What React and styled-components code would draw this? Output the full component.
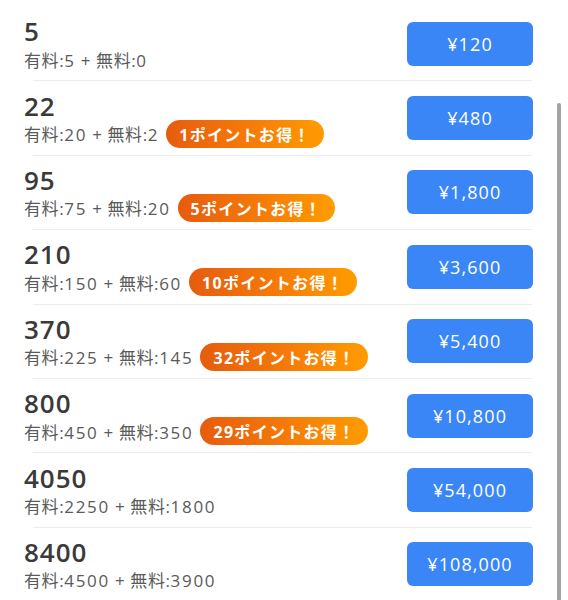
import styled, { createGlobalStyle } from "styled-components";

const GlobalStyle = createGlobalStyle`
    html, body {
        margin: 0;
        padding: 0;
        background: #ffffff;
    }
    body {
        font-family: "Open Sans", "Noto Sans CJK JP", sans-serif;
        overflow: hidden;
    }
`;

const Page = styled.div`
    position: relative;
    width: 568px;
    height: 600px;
    overflow: hidden;
    padding-top: 7px;
    box-sizing: border-box;
`;

const Row = styled.div`
    display: flex;
    align-items: center;
    justify-content: space-between;
    height: 73.4px;
    padding: 0 35px 0 24px;
    box-sizing: border-box;
`;

const Divider = styled.div`
    height: 1px;
    margin: 0 36px 0 33px;
    background: #ececec;
`;

const Info = styled.div`
    display: flex;
    flex-direction: column;
    padding-top: 3px;
`;

const Total = styled.div`
    font-size: 26px;
    font-weight: 600;
    line-height: 28px;
    letter-spacing: 1px;
    color: #3a3a3a;
`;

const Detail = styled.div`
    display: flex;
    align-items: center;
    gap: 7px;
    height: 28px;
    font-size: 17px;
    letter-spacing: 0.6px;
    color: #5a5a5a;
`;

const Num = styled.span`
    letter-spacing: 1.7px;
`;

const Badge = styled.span`
    display: inline-flex;
    align-items: center;
    height: 28px;
    padding: 0 13px;
    border-radius: 14px;
    background: linear-gradient(90deg, #e65c0e 0%, #f57908 50%, #ff9c00 100%);
    color: #ffffff;
    font-size: 16px;
    font-weight: 700;
    letter-spacing: 1.3px;
`;

const BuyButton = styled.button`
    width: 126px;
    height: 44px;
    border: none;
    border-radius: 6px;
    background: #3a86f7;
    color: #ffffff;
    font-family: inherit;
    font-size: 18px;
    font-weight: 400;
    letter-spacing: 1.1px;
    cursor: pointer;
`;

const ScrollThumb = styled.div`
    position: absolute;
    left: 557px;
    top: 103px;
    width: 4px;
    height: 520px;
    border-radius: 2px;
    background: #a3a3a3;
`;

const plans = [
    { total: 5, paid: 5, free: 0, bonus: null, price: "¥120" },
    { total: 22, paid: 20, free: 2, bonus: 1, price: "¥480" },
    { total: 95, paid: 75, free: 20, bonus: 5, price: "¥1,800" },
    { total: 210, paid: 150, free: 60, bonus: 10, price: "¥3,600" },
    { total: 370, paid: 225, free: 145, bonus: 32, price: "¥5,400" },
    { total: 800, paid: 450, free: 350, bonus: 29, price: "¥10,800" },
    { total: 4050, paid: 2250, free: 1800, bonus: null, price: "¥54,000" },
    { total: 8400, paid: 4500, free: 3900, bonus: null, price: "¥108,000" },
];

export default function App() {
    return (
        <Page>
            <GlobalStyle />
            {plans.map((plan, i) => (
                <div key={plan.total}>
                    <Row>
                        <Info>
                            <Total>{plan.total}</Total>
                            <Detail>
                                <span>
                                    有料:<Num>{plan.paid}</Num> + 無料:<Num>{plan.free}</Num>
                                </span>
                                {plan.bonus && <Badge>{plan.bonus}ポイントお得！</Badge>}
                            </Detail>
                        </Info>
                        <BuyButton type="button">{plan.price}</BuyButton>
                    </Row>
                    {i < plans.length - 1 && <Divider />}
                </div>
            ))}
            <ScrollThumb />
        </Page>
    );
}
